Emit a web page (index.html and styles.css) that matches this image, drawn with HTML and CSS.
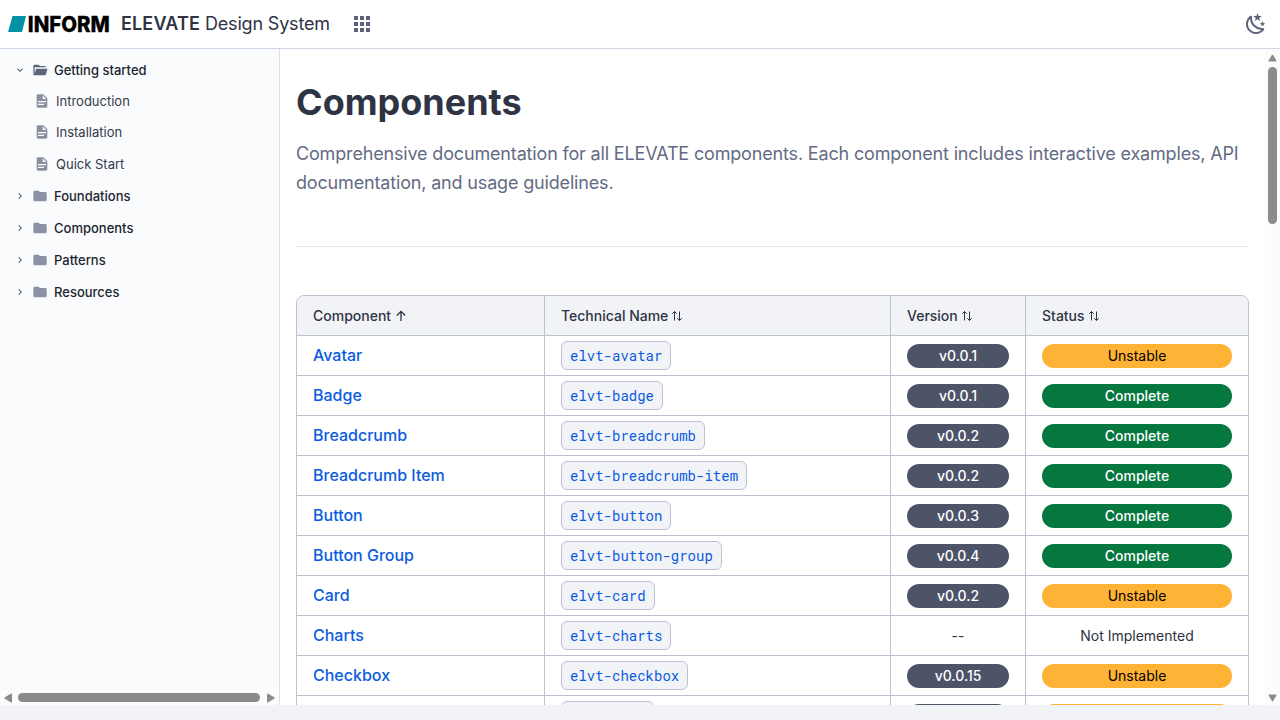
FILE: index.html
```
<!DOCTYPE html>
<html lang="en">
<head>
<meta charset="utf-8">
<title>ELEVATE Design System</title>
<link rel="stylesheet" href="styles.css">
</head>
<body>
<svg class="defs" width="0" height="0">
  <symbol id="folder" viewBox="0 0 24 24"><path d="M10 4H4c-1.1 0-2 .9-2 2v12c0 1.1.9 2 2 2h16c1.1 0 2-.9 2-2V8c0-1.1-.9-2-2-2h-8z"/></symbol>
  <symbol id="folder-open" viewBox="0 0 24 24"><path d="M19 20H4a2 2 0 0 1-2-2V6c0-1.1.9-2 2-2h6l2 2h7a2 2 0 0 1 2 2H4v10l2.14-8h17.07l-2.28 8.5c-.23.87-1.01 1.5-1.93 1.5z"/></symbol>
  <symbol id="file" viewBox="0 0 24 24"><path d="M13 9h5.500L13 3.500V9M6 2h8l6 6v12a2 2 0 0 1-2 2H6a2 2 0 0 1-2-2V4c0-1.100.890-2 2-2m9 16v-2H6v2h9m3-4v-2H6v2h12z"/></symbol>
  <symbol id="right" viewBox="0 0 24 24"><path d="M8.590 16.580 13.170 12 8.590 7.410 10 6l6 6-6 6z"/></symbol>
  <symbol id="down" viewBox="0 0 24 24"><path d="M7.410 8.580 12 13.170l4.590-4.590L18 10l-6 6-6-6z"/></symbol>
  <symbol id="sort" viewBox="0 0 12 12"><path d="M3.500 10.500V1.500M1.200 3.800l2.300-2.300L5.800 3.800M8.500 1.500v9M6.200 8.200l2.300 2.300 2.300-2.300" fill="none" stroke="currentColor"/></symbol>
</svg>
<header class="header">
  <svg class="logo" width="102" height="24" viewBox="0 0 102 24">
    <path d="M4.500 4H18l-4 16H0z" fill="#0091a7"/>
    <text class="logo-text" x="19.800" y="19.700" textLength="82" lengthAdjust="spacingAndGlyphs">INFORM</text>
  </svg>
  <div class="brand"><b>ELEVATE</b> Design System</div>
  <svg class="apps" width="24" height="24" viewBox="0 0 24 24"><path d="M4 4h4v4H4zM10 4h4v4h-4zM16 4h4v4h-4zM4 10h4v4H4zM10 10h4v4h-4zM16 10h4v4h-4zM4 16h4v4H4zM10 16h4v4h-4zM16 16h4v4h-4z"/></svg>
  <svg class="moon" width="24" height="24" viewBox="0 0 24 24"><path d="m17.750 4.090-2.530 1.940.910 3.060-2.630-1.810-2.630 1.810.910-3.060-2.530-1.940L12.440 4l1.060-3 1.060 3 3.190.090m3.500 6.910-1.640 1.250.590 1.980-1.700-1.170-1.700 1.170.590-1.980L15.750 11l2.060-.050L18.500 9l.690 1.950 2.060.050m-2.280 4.950c.830-.080 1.720 1.100 1.190 1.850-.320.450-.660.870-1.080 1.270C15.170 23 8.840 23 4.940 19.070c-3.910-3.900-3.910-10.240 0-14.140.400-.400.820-.760 1.270-1.080.750-.530 1.930.360 1.850 1.190-.270 2.860.690 5.830 2.890 8.020a9.960 9.960 0 0 0 8.020 2.890m-1.640 2.020a12.080 12.080 0 0 1-7.800-3.470c-2.170-2.190-3.330-5-3.490-7.820-2.810 3.140-2.700 7.960.310 10.980 3.020 3.010 7.840 3.120 10.980.310z"/></svg>
</header>
<div class="body">
  <aside class="sidebar">
    <nav class="tree">
      <div class="node open"><svg class="chev"><use href="#down"/></svg><svg class="ico"><use href="#folder-open"/></svg>Getting started</div>
      <div class="leaf"><svg class="ico"><use href="#file"/></svg>Introduction</div>
      <div class="leaf"><svg class="ico"><use href="#file"/></svg>Installation</div>
      <div class="leaf last"><svg class="ico"><use href="#file"/></svg>Quick Start</div>
      <div class="node"><svg class="chev"><use href="#right"/></svg><svg class="ico"><use href="#folder"/></svg>Foundations</div>
      <div class="node"><svg class="chev"><use href="#right"/></svg><svg class="ico"><use href="#folder"/></svg>Components</div>
      <div class="node"><svg class="chev"><use href="#right"/></svg><svg class="ico"><use href="#folder"/></svg>Patterns</div>
      <div class="node"><svg class="chev"><use href="#right"/></svg><svg class="ico"><use href="#folder"/></svg>Resources</div>
    </nav>
    <div class="hbar">
      <svg width="8" height="10" viewBox="0 0 8 10"><path d="M7 .500Q8 .500 8 1.500v7q0 1-1 1L.500 5.500q-.500-.500 0-1z"/></svg>
      <div class="hthumb"></div>
      <svg width="8" height="10" viewBox="0 0 8 10"><path d="M1 .500Q0 .500 0 1.500v7q0 1 1 1l6.500-4q.500-.500 0-1z"/></svg>
    </div>
  </aside>
  <main class="main">
    <h1 class="title">Components</h1>
    <p class="lead">Comprehensive documentation for all ELEVATE components. Each component includes interactive examples, API documentation, and usage guidelines.</p>
    <hr class="rule">
    <div class="table">
      <div class="row head">
        <div>Component <svg class="sort up" viewBox="0 0 12 12"><path d="M6 11V1.500M1.800 5.500 6 1.300l4.200 4.200" fill="none" stroke="currentColor" stroke-width="1.300"/></svg></div>
        <div>Technical Name <svg class="sort"><use href="#sort"/></svg></div>
        <div>Version <svg class="sort"><use href="#sort"/></svg></div>
        <div>Status <svg class="sort"><use href="#sort"/></svg></div>
      </div>
      <div class="row"><div><a>Avatar</a></div><div><code>elvt-avatar</code></div><div><span class="pill">v0.0.1</span></div><div><span class="pill warn">Unstable</span></div></div>
      <div class="row"><div><a>Badge</a></div><div><code>elvt-badge</code></div><div><span class="pill">v0.0.1</span></div><div><span class="pill ok">Complete</span></div></div>
      <div class="row"><div><a>Breadcrumb</a></div><div><code>elvt-breadcrumb</code></div><div><span class="pill">v0.0.2</span></div><div><span class="pill ok">Complete</span></div></div>
      <div class="row"><div><a>Breadcrumb Item</a></div><div><code>elvt-breadcrumb-item</code></div><div><span class="pill">v0.0.2</span></div><div><span class="pill ok">Complete</span></div></div>
      <div class="row"><div><a>Button</a></div><div><code>elvt-button</code></div><div><span class="pill">v0.0.3</span></div><div><span class="pill ok">Complete</span></div></div>
      <div class="row"><div><a>Button Group</a></div><div><code>elvt-button-group</code></div><div><span class="pill">v0.0.4</span></div><div><span class="pill ok">Complete</span></div></div>
      <div class="row"><div><a>Card</a></div><div><code>elvt-card</code></div><div><span class="pill">v0.0.2</span></div><div><span class="pill warn">Unstable</span></div></div>
      <div class="row"><div><a>Charts</a></div><div><code>elvt-charts</code></div><div><span class="plain">--</span></div><div><span class="plain">Not Implemented</span></div></div>
      <div class="row"><div><a>Checkbox</a></div><div><code>elvt-checkbox</code></div><div><span class="pill">v0.0.15</span></div><div><span class="pill warn">Unstable</span></div></div>
      <div class="row"><div></div><div><code class="blank"></code></div><div><span class="pill"></span></div><div><span class="pill warn"></span></div></div>
    </div>
  </main>
  <div class="vbar">
    <svg width="9" height="8" viewBox="0 0 10 8"><path d="M.500 7Q.500 8 1.500 8h7q1 0 1-1L5.500.500q-.500-.500-1 0z"/></svg>
    <div class="vthumb"></div>
    <svg class="bottom" width="9" height="8" viewBox="0 0 10 8"><path d="M.500 1Q.500 0 1.500 0h7q1 0 1 1L5.500 7.500q-.500.500-1 0z"/></svg>
  </div>
</div>
</body>
</html>
```
FILE: styles.css
```
* { box-sizing: border-box; }
body {
  margin: 0;
  height: 720px;
  overflow: hidden;
  background: #f2f3f7;
  color: #2d3142;
  font-family: Inter, sans-serif;
}
svg { flex: none; fill: currentColor; }
.defs { position: absolute; }
.header {
  display: flex;
  align-items: center;
  height: 49px;
  padding: 0 12px 1px 8px;
  border-bottom: 1px solid #d2d6e4;
  background: #fff;
  color: #5b637a;
}
.logo { overflow: visible; }
.logo-text { font: 800 21px Inter, sans-serif; fill: #000; stroke: #000; stroke-width: .3px; }
.brand { width: 209px; margin-left: 11px; font-size: 18px; line-height: 24px; letter-spacing: -.17px; color: #2f3445; white-space: nowrap; }
.brand b { font-weight: 600; letter-spacing: .14px; }
.apps { margin-left: 20px; }
.moon { margin-left: auto; }
.body { display: flex; height: 656px; overflow: hidden; background: #fff; }
.sidebar {
  display: flex;
  flex-direction: column;
  width: 280px;
  border-right: 1px solid #dcdfe8;
  background: #fafbfd;
}
.tree { flex: 1; padding-top: 5px; font-size: 13px; color: #21252f; }
.node { display: flex; align-items: center; height: 32px; padding-left: 14px; font-weight: 500; }
.chev { width: 12px; height: 12px; margin-right: 6px; color: #545c73; }
.ico { width: 16px; height: 16px; margin-right: 6px; color: #8b92a3; }
.open .ico { color: #5c647a; }
.leaf { display: flex; align-items: center; height: 31px; padding: 0 0 1px 34px; color: #353a4a; }
.leaf .ico { color: #8b90a0; }
.last { height: 32px; padding-bottom: 0; }
.hbar { display: flex; align-items: center; height: 15px; padding: 0 4px; background: #fcfcfc; color: #8b8b8b; }
.hthumb { flex: 1; height: 9px; margin: 0 7px 0 6px; border-radius: 5px; background: #8b8b8b; }
.main { width: 985px; padding: 0 16px; overflow: hidden; }
.title { margin: 31px 0 0; font-size: 36px; line-height: 45px; font-weight: 700; color: #2f3445; }
.lead { margin: 14px 0 0; font-size: 18px; line-height: 29px; letter-spacing: -.165px; color: #636b83; }
.rule { margin: 49px 0 48px; border: 0; border-top: 1px solid #e3e5ec; }
.table { width: 953px; border: 1px solid #bdc1cf; border-radius: 8px 8px 0 0; overflow: hidden; }
.row { display: grid; grid-template-columns: 248px 346px 135px 222px; height: 40px; }
.row > div {
  display: flex;
  align-items: center;
  padding: 0 16px;
  border-right: 1px solid #bdc1cf;
  border-bottom: 1px solid #bdc1cf;
}
.row > div:last-child { border-right: 0; }
.head { background: #f2f3f7; font-size: 14px; font-weight: 500; color: #2f3445; }
.sort { width: 12px; height: 12px; margin-left: 3px; }
.up { margin-left: 4px; }
.row a { margin-bottom: 1px; font-size: 16px; font-weight: 500; line-height: 20px; color: #0b5cdf; }
.row code {
  height: 29px;
  padding: 1px 8px 0;
  border: 1px solid #bdc1cf;
  border-radius: 6px;
  background: #f2f3f7;
  color: #0b5cdf;
  font: 14px/26px "Roboto Mono", "Liberation Mono", monospace;
}
.row .blank { width: 93px; }
.pill {
  width: 100%;
  height: 24px;
  margin-top: 1px;
  border-radius: 12px;
  background: #4d5468;
  color: #fff;
  font-size: 14px;
  font-weight: 500;
  line-height: 24px;
  text-align: center;
}
.ok { background: #06773e; }
.warn { background: #ffb336; color: #000; font-weight: 400; }
.plain { width: 100%; font-size: 14px; line-height: 24px; margin-top: 1px; text-align: center; }
.vbar { display: flex; flex-direction: column; align-items: center; width: 15px; padding: 5px 0 3px; background: #fcfcfc; color: #8b8b8b; }
.vthumb { width: 9px; height: 157px; margin-top: 5px; border-radius: 5px; background: #8b8b8b; }
.bottom { margin-top: auto; }
```
